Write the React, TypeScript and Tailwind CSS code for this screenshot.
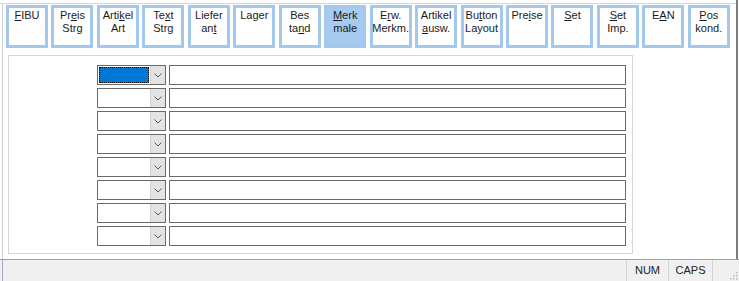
import React from 'react';

// toolbar buttons: [line1, line2, index of underlined char in line1, index in line2]
type Tab = { l1: string; l2?: string; u1?: number; u2?: number; active?: boolean };

const tabs: Tab[] = [
  { l1: 'FIBU', u1: 0 },
  { l1: 'Preis', l2: 'Strg', u1: 2 },
  { l1: 'Artikel', l2: 'Art', u1: 4 },
  { l1: 'Text', l2: 'Strg', u1: 2 },
  { l1: 'Liefer', l2: 'ant', u2: 2 },
  { l1: 'Lager' },
  { l1: 'Bes', l2: 'tand', u2: 2 },
  { l1: 'Merk', l2: 'male', u1: 0, active: true },
  { l1: 'Erw.', l2: 'Merkm.', u1: 1 },
  { l1: 'Artikel', l2: 'ausw.', u2: 0 },
  { l1: 'Button', l2: 'Layout', u1: 2 },
  { l1: 'Preise', u1: 3 },
  { l1: 'Set', u1: 0 },
  { l1: 'Set', l2: 'Imp.', u1: 0 },
  { l1: 'EAN', u1: 1 },
  { l1: 'Pos', l2: 'kond.', u1: 0 },
];

function Label({ text, u }: { text: string; u?: number }) {
  if (u === undefined) return <div>{text}</div>;
  return (
    <div>
      {text.slice(0, u)}
      <span className="underline underline-offset-[1px]">{text[u]}</span>
      {text.slice(u + 1)}
    </div>
  );
}

function TabButton({ tab }: { tab: Tab }) {
  return (
    <div
      className={
        'w-[42px] h-[43px] border-[3px] border-[#a3c8ec] flex flex-col items-center pt-[1px] leading-[13px] whitespace-nowrap text-[#1a1a1a] ' +
        (tab.active ? 'bg-[#a6caf0]' : 'bg-white')
      }
    >
      <Label text={tab.l1} u={tab.u1} />
      {tab.l2 && <Label text={tab.l2} u={tab.u2} />}
    </div>
  );
}

function Chevron() {
  return (
    <svg width="8" height="5" viewBox="0 0 8 5">
      <path d="M0.5 0.5 L4 4 L7.5 0.5" fill="none" stroke="#5a5a5a" strokeWidth="1" />
    </svg>
  );
}

function Row({ selected }: { selected?: boolean }) {
  return (
    <div className="flex gap-[3px] h-[20px]">
      <div className="w-[69px] h-full border border-[#6a6a6a] bg-white flex">
        <div className="flex-1 p-[1px]">
          {selected && (
            <div className="w-full h-full bg-[#0078d7] border border-dotted border-black" />
          )}
        </div>
        <div className="w-[15px] h-full bg-[#e3e3e3] border-l border-[#d2d2d2] flex items-center justify-center">
          <Chevron />
        </div>
      </div>
      <div className="w-[457px] h-full border border-[#6a6a6a] bg-white" />
    </div>
  );
}

function Grip() {
  const dots = [
    [7, 1],
    [7, 4],
    [4, 4],
    [7, 7],
    [4, 7],
    [1, 7],
  ];
  return (
    <svg width="9" height="9" viewBox="0 0 9 9">
      {dots.map(([x, y], i) => (
        <rect key={i} x={x} y={y} width="1.5" height="1.5" fill="#b8b8b8" />
      ))}
    </svg>
  );
}

export default function App() {
  return (
    <div
      className="w-[739px] h-[281px] bg-white flex flex-col text-[11px] overflow-hidden"
      style={{ fontFamily: '"Liberation Sans", Arial, sans-serif' }}
    >
      {/* main area */}
      <div className="h-[259px] w-[738px] flex flex-col border-r-2 border-[#7c7c7c]">
        <div className="h-[3px]" />
        <div className="h-px bg-[#d6d6d6]" />
        <div className="flex-1 ml-[2px] border-l border-[#cfcfd8] flex flex-col">
          <div className="pl-[3px] pt-[1px]">
            <div className="w-[724px] flex justify-between">
              {tabs.map((t, i) => (
                <TabButton key={i} tab={t} />
              ))}
            </div>
          </div>
          <div className="ml-[5px] mt-[7px] w-[625px] h-[199px] border border-[#d6d6d6] pl-[88px] pt-[9px] flex flex-col gap-[3px]">
            {Array.from({ length: 8 }).map((_, i) => (
              <Row key={i} selected={i === 0} />
            ))}
          </div>
        </div>
      </div>

      {/* status bar */}
      <div className="flex-1 border-t border-[#a0a0a0] bg-[#f0f0f0] flex">
        <div className="w-[2px]" />
        <div className="flex-1 border-l border-[#a8a8c0]" />
        <div className="w-[42px] border-l border-[#d2d2d2] flex items-center justify-center text-[#222]">
          NUM
        </div>
        <div className="w-[44px] border-l border-[#d2d2d2] flex items-center justify-center text-[#222]">
          CAPS
        </div>
        <div className="w-[27px] border-l border-[#d2d2d2] flex items-end justify-end pr-[1px] pb-[1px]">
          <Grip />
        </div>
      </div>
    </div>
  );
}
